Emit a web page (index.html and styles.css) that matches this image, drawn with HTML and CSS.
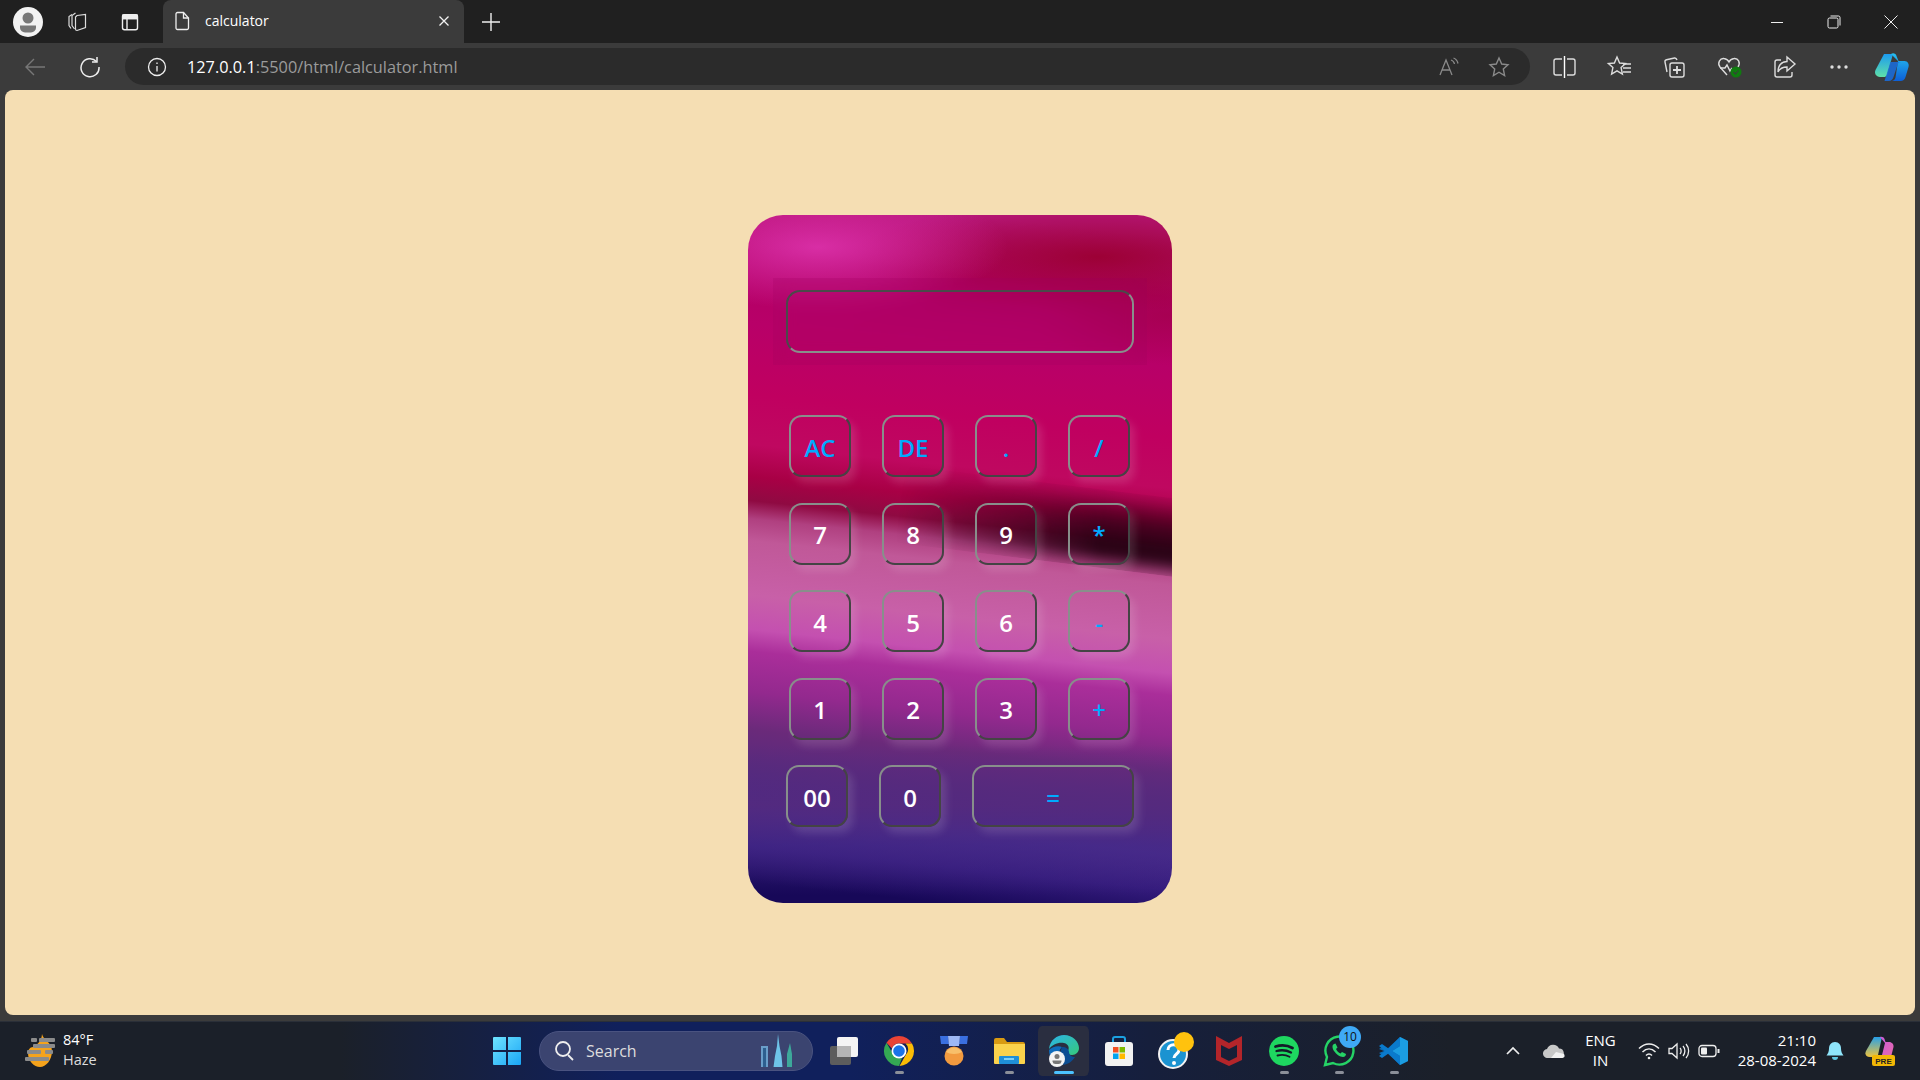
FILE: index.html
```html
<!DOCTYPE html>
<html>

<head>
  <meta charset="utf-8">
  <title>calculator</title>
  <link rel="stylesheet" href="styles.css">
</head>

<body>

  <!-- Browser tab strip -->
  <div class="tabbar">
    <div class="profile">
      <svg width="30" height="30" viewBox="0 0 30 30"><circle cx="15" cy="15" r="15" fill="#f2f2f2"/><circle cx="15" cy="11" r="5.5" fill="#777"/><path d="M7 18.5h16v2a5 5 0 0 1-5 5h-6a5 5 0 0 1-5-5z" fill="#777"/></svg>
    </div>
    <div class="tab-tool">
      <svg width="22" height="22" viewBox="0 0 22 22" fill="none" stroke="#ddd" stroke-width="1.2"><path d="M6 3.5 3 5.5v9l2 3"/><path d="M9.5 2 6 4.5v10l2.500 3.500"/><path d="M11 4.500 19.500 3.500v13l-8.500 3a1.500 1.500 0 0 1-1.500-1.500V6z"/></svg>
    </div>
    <div class="tab-tool">
      <svg width="20" height="20" viewBox="0 0 20 20" fill="none" stroke="#eee" stroke-width="1.400"><rect x="2.500" y="2.700" width="15" height="15" rx="2"/><path d="M2.500 6.500h15M7 6.500v11"/><path d="M3 3h14v3.500H3z" fill="#eee"/></svg>
    </div>
    <div class="tab">
      <svg class="tab-doc" width="18" height="20" viewBox="0 0 18 20" fill="none" stroke="#eee" stroke-width="1.300"><path d="M3 3a1.500 1.500 0 0 1 1.500-1.500h6L15.500 7v10a1.500 1.500 0 0 1-1.500 1.500H4.500A1.500 1.500 0 0 1 3 17z"/><path d="M10.500 1.500V7h5"/></svg>
      <span class="tab-title">calculator</span>
      <svg class="tab-close" width="12" height="12" viewBox="0 0 12 12" stroke="#f2f2f2" stroke-width="1.300"><path d="M1.500 1.500l9 9M10.500 1.500l-9 9"/></svg>
    </div>
    <svg class="new-tab" width="20" height="20" viewBox="0 0 20 20" stroke="#eee" stroke-width="1.400"><path d="M10 1v18M1 10h18"/></svg>
    <div class="window-controls">
      <svg width="14" height="14" viewBox="0 0 14 14" stroke="#eee"><path d="M1 7.500h12"/></svg>
      <svg width="14" height="14" viewBox="0 0 14 14" fill="none" stroke="#eee"><rect x="1" y="3" width="10" height="10" rx="1.500"/><path d="M3.500 1h8a1.500 1.500 0 0 1 1.500 1.500v8"/></svg>
      <svg width="14" height="14" viewBox="0 0 14 14" stroke="#eee"><path d="M.5.500l13 13M13.500.500l-13 13"/></svg>
    </div>
  </div>

  <!-- Address bar and toolbar -->
  <div class="toolbar">
    <svg class="nav-back" width="24" height="22" viewBox="0 0 24 22" fill="none" stroke="#777" stroke-width="1.400"><path d="M22 11H3M11 3l-8 8 8 8"/></svg>
    <svg class="nav-reload" width="22" height="22" viewBox="0 0 22 22" fill="none" stroke="#eee" stroke-width="1.500"><path d="M17.500 5.500A9 9 0 1 0 20 11"/><path d="M18 1v5h-5"/></svg>
    <div class="address">
      <svg width="20" height="20" viewBox="0 0 20 20" fill="none" stroke="#eee" stroke-width="1.300"><circle cx="10" cy="10" r="8.500"/><path d="M10 9v5.500M10 5.500v1.500"/></svg>
      <span class="url"><span class="url-host">127.0.0.1</span>:5500/html/calculator.html</span>
      <div class="address-end">
        <svg width="22" height="22" viewBox="0 0 22 22" fill="none" stroke="#8a8a8a" stroke-width="1.300"><path d="M2 19 8 4l6 15M4.200 14h7.600"/><path d="M13 4c2 .6 3.200 2.200 3.500 4M15.500 2c2.500 1 4 3 4.500 5.500"/></svg>
        <svg width="22" height="22" viewBox="0 0 22 22" fill="none" stroke="#8a8a8a" stroke-width="1.400"><path d="m11 2 2.700 6 6.300.7-4.700 4.300 1.300 6.500-5.600-3.300-5.600 3.300L6.700 13 2 8.700 8.300 8z"/></svg>
      </div>
    </div>
    <div class="tools">
      <svg width="45" height="24" viewBox="0 0 45 24" fill="none" stroke="#ddd" stroke-width="1.400"><path d="M20 4h-6a2 2 0 0 0-2 2v12a2 2 0 0 0 2 2h6M25 4h6a2 2 0 0 1 2 2v12a2 2 0 0 1-2 2h-6"/><path d="M22.500 1v22" stroke="#fff"/></svg>
      <svg width="45" height="24" viewBox="0 0 45 24" fill="none" stroke="#ddd" stroke-width="1.400"><path d="m20 2 2.600 6 6 .6-4.500 4 1.300 6.400-5.400-3.200-5.400 3.200 1.300-6.400-4.500-4 6-.6z"/><path d="M26 9h8M26 13h8M26 17h8"/></svg>
      <svg width="45" height="24" viewBox="0 0 45 24" fill="none" stroke="#ddd" stroke-width="1.400"><path d="M15 17 13 7a2 2 0 0 1 1.500-2.300l8-1.700c1.300-.2 2 .4 2.500 2"/><rect x="18" y="8" width="14" height="14" rx="2"/><path d="M25 11v8M21 15h8" stroke-width="1.800"/></svg>
      <svg width="45" height="24" viewBox="0 0 45 24" fill="none" stroke="#ddd" stroke-width="1.400"><path d="M20 20 13 12c-3-4 0-9 4-8.500 2 .2 4 1.500 5 3.500 1-2 3-3.300 5-3.500 4-.5 7 4 4 8.500"/><path d="M13 13h5l2-3 3 6 2-3"/><circle cx="29" cy="17" r="5.500" fill="#107c10" stroke="none"/><path d="m26.500 17 2 2 3-3.500" stroke="#3b3b3b" stroke-width="1.100"/></svg>
      <svg width="45" height="24" viewBox="0 0 45 24" fill="none" stroke="#ddd" stroke-width="1.400"><path d="M19 5h-4a2 2 0 0 0-2 2v13a2 2 0 0 0 2 2h13a2 2 0 0 0 2-2v-3"/><path d="M25 2l8 7-8 7v-4c-4 0-7 1-9 5 0-6 3-10 9-10.500z"/></svg>
      <svg width="45" height="24" viewBox="0 0 45 24" fill="#ddd"><circle cx="15" cy="12" r="1.700"/><circle cx="22" cy="12" r="1.700"/><circle cx="29" cy="12" r="1.700"/></svg>
      <svg width="36" height="30" viewBox="0 0 36 30">
        <defs>
          <linearGradient id="copA" x1="0" y1="0" x2="0" y2="1"><stop offset="0" stop-color="#1c9bf0"/><stop offset="1" stop-color="#5fe0a8"/></linearGradient>
          <linearGradient id="copB" x1="0" y1="0" x2="0" y2="1"><stop offset="0" stop-color="#26c0f0"/><stop offset="1" stop-color="#0c5fd8"/></linearGradient>
        </defs>
        <path d="M10 2h9l-6 21c-.6 1.600-2 2-3 2H6C2 25 0 21 1.500 18z" fill="url(#copA)"/>
        <path d="M17 2c2-1.500 5-.5 5.500 2l2 5h6c3 0 5 3 4 6l-3 10c-.7 2.500-2.500 4-5 4h-9c2 0 3.500-1.500 4-3.500L24 9z" fill="url(#copB)"/>
        <path d="M17 10h10c-2 0-3 1-3.500 3l-4 12c-.7 2-2 4-5 4h-4l5-16c.2-1.500.8-3 1.500-3z" fill="#1a6fe0" opacity=".85"/>
      </svg>
    </div>
  </div>

  <!-- The calculator page -->
  <div class="page">
    <div class="calculator">
      <form class="display-wrap">
        <input class="display" type="text">
      </form>
      <div class="keys">
        <div class="row">
          <button class="key op">AC</button>
          <button class="key op">DE</button>
          <button class="key op">.</button>
          <button class="key op">/</button>
        </div>
        <div class="row">
          <button class="key">7</button>
          <button class="key">8</button>
          <button class="key">9</button>
          <button class="key op">*</button>
        </div>
        <div class="row">
          <button class="key">4</button>
          <button class="key">5</button>
          <button class="key">6</button>
          <button class="key op">-</button>
        </div>
        <div class="row">
          <button class="key">1</button>
          <button class="key">2</button>
          <button class="key">3</button>
          <button class="key op">+</button>
        </div>
        <div class="row last-row">
          <button class="key">00</button>
          <button class="key">0</button>
          <button class="key op wide">=</button>
        </div>
      </div>
    </div>
  </div>

  <!-- Windows taskbar -->
  <div class="taskbar">
    <div class="weather">
      <svg width="32" height="36" viewBox="0 0 32 36">
        <path d="M17 1c1 6 10 8 10 17 0 9-6 16-12 16S3 28 3 20c0-3 2-6 5-6 1 0 9-5 9-13z" fill="#f5a31c"/>
        <g fill="#8b8b8b"><rect x="6" y="5" width="6" height="4" rx="1"/><rect x="14" y="5" width="16" height="4" rx="1"/><rect x="8" y="11" width="22" height="4" rx="1"/><rect x="2" y="17" width="14" height="4" rx="1"/><rect x="20" y="17" width="8" height="4" rx="1"/><rect x="0" y="24" width="24" height="4" rx="1"/></g>
      </svg>
      <div class="weather-text">
        <span class="temp">84°F</span>
        <span>Haze</span>
      </div>
    </div>

    <div class="task-center">
      <svg class="start" width="30" height="30" viewBox="0 0 30 30">
        <defs>
          <linearGradient id="winA" x1="0" y1="0" x2="1" y2="1"><stop offset="0" stop-color="#6fe4ff"/><stop offset="1" stop-color="#1aa5f5"/></linearGradient>
        </defs>
        <path d="M1 2a1 1 0 0 1 1-1h12v13H1zM16 1h12a1 1 0 0 1 1 1v12H16zM1 16h13v13H2a1 1 0 0 1-1-1zM16 16h13v12a1 1 0 0 1-1 1H16z" fill="url(#winA)"/>
      </svg>
      <div class="search">
        <svg width="22" height="24" viewBox="0 0 22 24" fill="none" stroke="#eee" stroke-width="1.800"><circle cx="10" cy="10" r="7"/><path d="m15 16 5 5"/></svg>
        <span>Search</span>
        <svg class="skyline" width="38" height="34" viewBox="0 0 38 34">
          <path d="M3 12h7v21H3z" fill="#6a9ec9"/>
          <path d="M5 14h3v19H5z" fill="#2d5f8f"/>
          <path d="M20 0l1.500 12 2 10 1 11h-9l1.500-11 2-10z" fill="#6ec4e8"/>
          <path d="M32 9l2 11v13h-5V20z" fill="#3da89a"/>
        </svg>
      </div>
      <div class="task-icons">
        <div class="task-icon">
          <svg width="30" height="30" viewBox="0 0 30 30"><rect x="1" y="10" width="21" height="19" rx="2" fill="#5d5d5d"/><rect x="8" y="1" width="21" height="20" rx="2" fill="#f4f4f4"/><rect x="8" y="10" width="14" height="11" fill="#b5b5b5"/></svg>
        </div>
        <div class="task-icon running">
          <svg width="32" height="32" viewBox="0 0 32 32">
            <path d="M16 1a15 15 0 0 1 13 7.500H16a7.500 7.500 0 0 0-7 5L3.500 7.800A15 15 0 0 1 16 1z" fill="#ea4335"/>
            <path d="M29 8.500A15 15 0 0 1 16.500 31l6.500-11.500a7.500 7.500 0 0 0-.5-11z" fill="#fbbc05"/>
            <path d="M3.500 7.800 10 19a7.500 7.500 0 0 0 9 4l-3 8A15 15 0 0 1 3.500 7.800z" fill="#34a853"/>
            <circle cx="16" cy="16" r="7.500" fill="#fff"/><circle cx="16" cy="16" r="5.800" fill="#1a73e8"/>
          </svg>
        </div>
        <div class="task-icon">
          <svg width="32" height="32" viewBox="0 0 32 32">
            <path d="M2 1h8l1 8H3z" fill="#3a6fe0"/><path d="M22 1h8l-1 8h-8z" fill="#3a6fe0"/><path d="M10 1h12l-1 10H11z" fill="#9db8f5"/>
            <circle cx="16" cy="21" r="9.500" fill="#f29a3f"/><path d="M8 17a9.500 9.500 0 0 1 16 0c-4 2.500-12 2.500-16 0z" fill="#f8bf6a"/>
          </svg>
        </div>
        <div class="task-icon running">
          <svg width="32" height="30" viewBox="0 0 32 30">
            <path d="M1 4a2 2 0 0 1 2-2h8l3 4h16a2 2 0 0 1 2 2v4H1z" fill="#d99a12"/>
            <path d="M1 8h31v19a1 1 0 0 1-1 1H2a1 1 0 0 1-1-1z" fill="#fbd24c"/>
            <rect x="6" y="20" width="20" height="8" rx="1" fill="#1f8fd8"/><rect x="11" y="22" width="10" height="2" fill="#7fd0f7"/>
          </svg>
        </div>
        <div class="task-icon active">
          <svg width="32" height="34" viewBox="0 0 32 34">
            <defs>
              <linearGradient id="edgeA" x1="0" y1="0" x2="1" y2="1"><stop offset="0" stop-color="#2bb3ea"/><stop offset="1" stop-color="#36c97a"/></linearGradient>
            </defs>
            <path d="M1 15C2 6 9 1 16 1c9 0 15 7 15 13 0 4-3 7-7 7-3 0-5-1-5-3 3-3 2-8-3-9-6-1-12 2-15 6z" fill="url(#edgeA)"/>
            <path d="M12 31c-6-1-11-7-11-15 3-3 9-5 13-3-3 3-5 9-2 18z" fill="#0f6cbd"/>
            <path d="M14 13c4 0 7 2 7 5 0 3 3 5 6 5-3 5-8 8-14 8-2-6-1-14 1-18z" fill="#0c4d92"/>
            <circle cx="9" cy="25" r="8" fill="#f4f4f4"/><circle cx="9" cy="22.500" r="2.500" fill="#777"/><path d="M4.500 26.500h9v1a3 3 0 0 1-3 2.500h-3a3 3 0 0 1-3-2.500z" fill="#777"/>
          </svg>
        </div>
        <div class="task-icon">
          <svg width="30" height="32" viewBox="0 0 30 32">
            <path d="M9 9V4a2 2 0 0 1 2-2h8a2 2 0 0 1 2 2v5" fill="none" stroke="#1ba1e2" stroke-width="2"/>
            <rect x="1" y="7" width="28" height="24" rx="3" fill="#f2f2f2"/>
            <rect x="9" y="12" width="5.500" height="5.500" fill="#f25022"/><rect x="15.500" y="12" width="5.500" height="5.500" fill="#7fba00"/><rect x="9" y="18.500" width="5.500" height="5.500" fill="#00a4ef"/><rect x="15.500" y="18.500" width="5.500" height="5.500" fill="#ffb900"/>
          </svg>
        </div>
        <div class="task-icon">
          <svg width="38" height="38" viewBox="0 0 38 38" class="help-icon">
            <circle cx="16" cy="22" r="14" fill="#1b93d1" stroke="#f2f2f2" stroke-width="2"/>
            <path d="M11 18c0-7 11-7 11 0 0 4-5 4-5 8" fill="none" stroke="#fff" stroke-width="3"/><circle cx="17" cy="31" r="2" fill="#fff"/>
            <circle cx="27" cy="10" r="10" fill="#ffc20e"/>
          </svg>
        </div>
        <div class="task-icon">
          <svg width="28" height="32" viewBox="0 0 28 32"><path d="M1 1l13 7 13-7v24l-13 6-13-6zM6 10v12l8 4 8-4V10l-8 4z" fill="#b3252a" fill-rule="evenodd"/></svg>
        </div>
        <div class="task-icon running">
          <svg width="30" height="30" viewBox="0 0 30 30" fill="none" stroke="#141a28" stroke-linecap="round"><circle cx="15" cy="15" r="15" fill="#1ed760" stroke="none"/><path d="M6.500 10.500c6-1.800 12-1.300 17 1.500" stroke-width="2.800"/><path d="M7.500 15c5-1.300 10-.9 14.500 1.500" stroke-width="2.300"/><path d="M8.500 19.500c4-1 8.500-.7 12 1.300" stroke-width="1.900"/></svg>
        </div>
        <div class="task-icon running">
          <svg width="32" height="32" viewBox="0 0 32 32" fill="none"><path d="M2 30l2-8A14 14 0 1 1 10 28z" stroke="#25d366" stroke-width="2.400"/><path d="M11 9c-2 1-2 4 0 7s6 6 9 6c2 0 3-2 3-3l-4-2-1.500 1.500c-2-.8-3.500-2.300-4.500-4.500l1.500-1.500-2-4z" fill="#25d366"/></svg>
          <span class="badge">10</span>
        </div>
        <div class="task-icon running">
          <svg width="30" height="30" viewBox="0 0 30 30">
            <path d="M21 1l8 4v20l-8 4L7 16l-4 3-3-2 5-2-5-2 3-2 4 3z" fill="#0b6fb8"/>
            <path d="M21 1l8 4v20l-8 4V20l-8-5 8-5z" fill="#1b9de2"/>
            <path d="M21 1 9.500 12.500 3 8 0 10l6 5-6 5 3 2 6.500-4.500L21 29V20l-8-5 8-5z" fill="#0a7acc"/>
          </svg>
        </div>
      </div>
    </div>

    <div class="tray">
      <svg width="14" height="10" viewBox="0 0 14 10" fill="none" stroke="#eee" stroke-width="1.700"><path d="m1 8 6-6 6 6"/></svg>
      <svg class="tray-cloud" width="22" height="14" viewBox="0 0 22 14"><path d="M5 14a4.500 4.500 0 0 1-1-9A6.500 6.500 0 0 1 16 4.500 4.800 4.800 0 0 1 17 14z" fill="#c8c8c8"/><path d="M8 14 13 8l8 2c1.500 3 0 4-3 4z" fill="#f2f2f2"/></svg>
      <div class="lang">ENG<br>IN</div>
      <div class="tray-status">
        <svg width="22" height="18" viewBox="0 0 22 18" fill="none" stroke="#eee" stroke-width="1.500"><path d="M1 6.500c6-6 14-6 20 0M4.500 10c4-4 9-4 13 0M8 13.500c2-2 4-2 6 0"/><circle cx="11" cy="16" r="1.300" fill="#eee" stroke="none"/></svg>
        <svg width="22" height="18" viewBox="0 0 22 18" fill="none" stroke="#eee" stroke-width="1.300"><path d="M1 6.500h3l5-4.500v14l-5-4.500H1z"/><path d="M12 6c1.500 1.500 1.500 4.500 0 6M15 4c2.500 2.800 2.500 7.200 0 10M18 2c3.500 4 3.500 10 0 14"/></svg>
        <svg width="22" height="14" viewBox="0 0 22 14" fill="none" stroke="#eee" stroke-width="1.300"><rect x="1" y="1.500" width="17" height="11" rx="3"/><rect x="3" y="3.500" width="6" height="7" rx="1" fill="#eee" stroke="none"/><path d="M20.500 5v4" stroke-width="2"/></svg>
      </div>
      <div class="clock">21:10<br>28-08-2024</div>
      <svg class="bell" width="18" height="20" viewBox="0 0 18 20"><path d="M9 1c4 0 6 3 6 6.500 0 3 1 5 2.500 7H.5C2 12.500 3 10.500 3 7.500 3 4 5 1 9 1z" fill="#8fe5fb"/><path d="M6 16h6a3 3 0 0 1-6 0z" fill="#5fc6e2"/></svg>
      <svg class="copilot-pre" width="30" height="30" viewBox="0 0 30 30">
        <defs>
          <linearGradient id="preA" x1="0" y1="0" x2="0" y2="1"><stop offset="0" stop-color="#27a0e8"/><stop offset="1" stop-color="#f0c43c"/></linearGradient>
          <linearGradient id="preB" x1="0" y1="0" x2="1" y2="1"><stop offset="0" stop-color="#c85ae0"/><stop offset="1" stop-color="#e86aa8"/></linearGradient>
        </defs>
        <path d="M9 1h8l-4 18c-.5 1.500-2 2-3 2H5C1 21-.5 18 1 15z" fill="url(#preA)"/>
        <path d="M15 1c2-.5 4 .5 4.500 2l1 3h3.500c3 0 5 2.500 4.500 5l-2 8c-.5 2-2 3-4 3h-9c2 0 3-1 3.500-3l3-12z" fill="url(#preB)"/>
        <rect x="7" y="19" width="23" height="11" rx="2" fill="#f2b705"/>
        <text x="18.500" y="28" class="pre-label">PRE</text>
      </svg>
    </div>
  </div>

</body>

</html>
```

FILE: styles.css
```css
* {
  box-sizing: border-box;
}

html,
body {
  margin: 0;
  padding: 0;
  height: 100%;
}

body {
  display: flex;
  flex-direction: column;
  height: 1080px;
  overflow: hidden;
  font-family: 'Open Sans', sans-serif;
  background-color: #3b3b3b;
  color: #fff;
}

svg {
  display: block;
  flex-shrink: 0;
}

/* Tab strip */
.tabbar {
  display: flex;
  align-items: center;
  height: 43px;
  padding-left: 13px;
  background-color: #202020;
}

.profile {
  width: 30px;
  margin-right: 23px;
}

.tab-tool {
  display: flex;
  justify-content: center;
  width: 22px;
  margin-right: 31px;
}

.tab-tool + .tab-tool {
  margin-right: 22px;
}

.tab {
  display: flex;
  align-items: center;
  width: 301px;
  height: 43px;
  padding: 0 14px 2px 10px;
  background-color: #3b3b3b;
  border-radius: 8px 8px 0 0;
  font-size: 14px;
}

.tab-title {
  flex: 1;
  margin-left: 14px;
}

.new-tab {
  margin-left: 17px;
}

.window-controls {
  display: flex;
  gap: 43px;
  margin-left: auto;
  padding-right: 22px;
}

/* Toolbar */
.toolbar {
  display: flex;
  align-items: center;
  height: 47px;
  background-color: #3b3b3b;
}

.nav-back {
  margin-left: 23px;
}

.nav-reload {
  margin-left: 32px;
}

.address {
  display: flex;
  align-items: center;
  width: 1405px;
  height: 37px;
  margin-left: 24px;
  padding: 0 20px 0 22px;
  background-color: #2b2b2b;
  border-radius: 19px;
}

.url {
  margin-left: 20px;
  font-size: 16.3px;
  color: #9b9b9b;
  white-space: nowrap;
}

.url-host {
  color: #fff;
}

.address-end {
  display: flex;
  gap: 28px;
  margin-left: auto;
}

.tools {
  display: flex;
  align-items: center;
  gap: 10px;
  margin-left: 12px;
}

.tools svg:last-child {
  margin-left: 2px;
}

/* Page */
.page {
  flex: 1;
  margin: 0 5px;
  padding-top: 125px;
  display: flex;
  justify-content: center;
  align-items: flex-start;
  background-color: #f5deb3;
  border-radius: 8px;
}

.calculator {
  position: relative;
  width: 424px;
  height: 688px;
  padding: 63px 25px 0;
  border-radius: 35px;
  background-color: #c00060;
  background-image:
    radial-gradient(ellipse 190px 62px at 70px 32px, rgba(218, 48, 168, 0.95), rgba(200, 40, 150, 0) 100%),
    radial-gradient(ellipse 250px 55px at 350px 42px, rgba(155, 0, 50, 0.95), rgba(160, 0, 55, 0) 100%),
    radial-gradient(ellipse 130px 50px at 420px 100px, rgba(160, 0, 70, 0.6), rgba(160, 0, 70, 0) 100%),
    linear-gradient(180deg, rgba(86, 42, 126, 0) 530px, rgba(84, 42, 126, 0.85) 590px, rgba(70, 42, 136, 0.6) 630px, rgba(50, 27, 124, 0) 680px),
    linear-gradient(186deg,
      #b8187c 22px,
      #b00064 82px,
      #b80068 152px,
      #c00060 222px,
      #bf0860 272px,
      #a80045 304px,
      #8f0a42 328px,
      #b04080 346px,
      #c05898 368px,
      #c860a8 422px,
      #c450b0 456px,
      #aa2e9a 478px,
      #93298e 518px,
      #6a2a7a 556px,
      #562a7e 598px,
      #46298a 636px,
      #341b7c 672px,
      #170858 708px);
  overflow: hidden;
}

/* Dark streak across the right of the picture */
.calculator::before {
  content: "";
  position: absolute;
  left: 150px;
  top: 270px;
  width: 330px;
  height: 78px;
  background-image: linear-gradient(180deg, rgba(24, 0, 12, 0) 0, rgba(24, 0, 12, 0.6) 35%, #1e000e 80%, rgba(30, 0, 14, 0) 100%);
  -webkit-mask-image: linear-gradient(90deg, transparent 0, rgba(0, 0, 0, 0.45) 28%, #000 62%);
  mask-image: linear-gradient(90deg, transparent 0, rgba(0, 0, 0, 0.45) 28%, #000 62%);
  transform: rotate(7deg);
  filter: blur(7px);
}

.display-wrap {
  position: relative;
  height: 87px;
  padding: 12px 13px;
  background-color: rgba(150, 0, 90, 0.14);
  backdrop-filter: blur(10px);
}

.display {
  display: block;
  width: 348px;
  height: 63px;
  background-color: transparent;
  border: 2px solid;
  border-color: #4a4a4a #888f8b #888f8b #4a4a4a;
  border-radius: 14px;
}

.keys {
  position: relative;
  display: flex;
  flex-direction: column;
  gap: 25.5px;
  margin-top: 50px;
}

.row {
  display: flex;
  justify-content: center;
  gap: 31px;
  padding-right: 1px;
}

.last-row {
  padding-right: 0;
}

.key {
  width: 62px;
  height: 62px;
  padding: 2px 0 0;
  background-color: transparent;
  border: 2px solid;
  border-color: #888f8b #444 #444 #888f8b;
  border-radius: 13px;
  box-shadow: 5px 6px 9px rgba(255, 255, 255, 0.13);
  font-family: 'Open Sans', sans-serif;
  font-size: 24px;
  font-weight: 600;
  color: #fff;
}

.op {
  color: #00aaff;
}

.wide {
  width: 162px;
}

/* Taskbar */
.taskbar {
  display: flex;
  align-items: center;
  height: 59px;
  margin-top: 6px;
  background-color: #1b2029;
  background-image: linear-gradient(90deg, #1b2029 0, #1b2029 340px, #10205c 620px, #10205c 850px, #161f3c 1150px, #1b2029 1450px);
  border-top: 1px solid #2a2f38;
  position: relative;
}

.weather {
  display: flex;
  align-items: center;
  width: 140px;
  padding-left: 25px;
}

.weather-text {
  display: flex;
  flex-direction: column;
  margin: -2px 0 0 6px;
  font-size: 14.5px;
  line-height: 20px;
  color: #ddd;
}

.temp {
  color: #fff;
}

.task-center {
  display: flex;
  align-items: center;
  margin-left: 352px;
}

.search {
  display: flex;
  align-items: center;
  width: 274px;
  height: 40px;
  margin-left: 17px;
  padding: 0 16px 0 13px;
  background-color: #3b4470;
  border: 1px solid #4a5380;
  border-radius: 20px;
  font-size: 16px;
  color: #ddd;
}

.search span {
  margin-left: 11px;
}

.skyline {
  margin-left: auto;
}

.task-icons {
  display: flex;
  margin-left: 3px;
}

.task-icon {
  position: relative;
  display: flex;
  align-items: center;
  justify-content: center;
  width: 55px;
  height: 50px;
}

.help-icon {
  margin-left: 4px;
}

.running::after,
.active::after {
  content: "";
  position: absolute;
  left: 50%;
  bottom: 2px;
  width: 9px;
  height: 3px;
  margin-left: -4px;
  background-color: #8b8f99;
  border-radius: 2px;
}

.active {
  background-color: #2a2e40;
  background-clip: content-box;
  padding: 0 2px;
  border-radius: 6px;
}

.active::after {
  width: 20px;
  margin-left: -10px;
  background-color: #4cc2ff;
}

.badge {
  position: absolute;
  top: 0;
  right: 5px;
  width: 22px;
  height: 22px;
  border-radius: 50%;
  background-color: #3fa9f5;
  color: #111;
  font-size: 12px;
  line-height: 22px;
  text-align: center;
}

.tray {
  display: flex;
  align-items: center;
  margin-left: auto;
  padding-right: 25px;
  font-size: 15px;
}

.tray-cloud {
  margin-left: 23px;
}

.lang {
  margin: -2px 0 0 20px;
  text-align: center;
  line-height: 20px;
}

.tray-status {
  display: flex;
  align-items: center;
  gap: 8px;
  margin-left: 22px;
}

.clock {
  margin: -2px 0 0 18px;
  text-align: right;
  line-height: 20px;
}

.bell {
  margin-left: 10px;
}

.copilot-pre {
  margin-left: 21px;
}

.pre-label {
  font-family: 'Liberation Sans', sans-serif;
  font-size: 8px;
  font-weight: 700;
  fill: #222;
  text-anchor: middle;
}
```
